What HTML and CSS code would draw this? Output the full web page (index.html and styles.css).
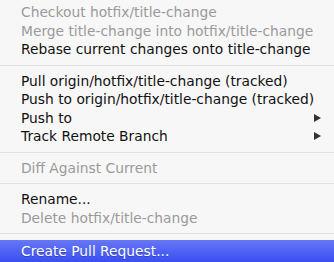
FILE: index.html
```html
<!DOCTYPE html>
<html lang="en">
<head>
<meta charset="UTF-8">
<title>Branch menu</title>
<link rel="stylesheet" href="styles.css">
</head>
<body>
<div class="menu">
  <div class="item disabled">Checkout hotfix/title-change</div>
  <div class="item disabled">Merge title-change into hotfix/title-change</div>
  <div class="item">Rebase current changes onto title-change</div>
  <div class="sep"></div>
  <div class="item">Pull origin/hotfix/title-change (tracked)</div>
  <div class="item">Push to origin/hotfix/title-change (tracked)</div>
  <div class="item submenu">Push to <span class="arrow"></span></div>
  <div class="item submenu">Track Remote Branch <span class="arrow"></span></div>
  <div class="sep"></div>
  <div class="item disabled">Diff Against Current</div>
  <div class="sep"></div>
  <div class="item">Rename...</div>
  <div class="item disabled">Delete hotfix/title-change</div>
  <div class="sep"></div>
  <div class="item selected">Create Pull Request...</div>
</div>
</body>
</html>
```

FILE: styles.css
```css
body {
  margin: 0;
  padding: 0;
  background-color: #f7f7f7;
  font-family: 'DejaVu Sans', sans-serif;
}

.menu {
  padding-top: 3px;
  background-color: #f7f7f7;
  width: 334px;
  height: 262px;
  overflow: hidden;
}

.item {
  height: 18.5px;
  line-height: 18.5px;
  padding: 0 13px 0 21px;
  font-size: 13.8px;
  color: #111;
  white-space: nowrap;
  display: flex;
  align-items: center;
  justify-content: space-between;
}

.item.disabled {
  color: #9a9a9a;
}

.item.selected {
  height: 22px;
  line-height: 22px;
  color: #fff;
  background: linear-gradient(#6677f7, #3a4ef1);
  text-shadow: 0 1px 0 rgba(0, 0, 0, 0.25);
}

.sep {
  height: 13px;
  display: flex;
  align-items: center;
}

.sep::after {
  content: '';
  display: block;
  width: 100%;
  height: 1px;
  background-color: #e1e1e1;
}

.arrow {
  width: 0;
  height: 0;
  border-left: 7px solid #333;
  border-top: 4px solid transparent;
  border-bottom: 4px solid transparent;
}
```
